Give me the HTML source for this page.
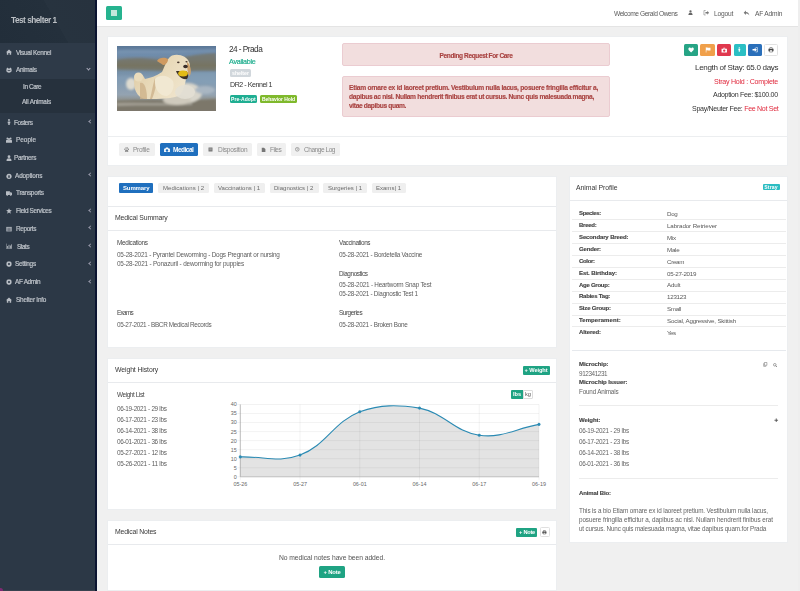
<!DOCTYPE html><html><head><meta charset="utf-8"><style>
*{margin:0;padding:0;box-sizing:border-box}
html,body{width:800px;height:591px;overflow:hidden;background:#f0f0f0;font-family:"Liberation Sans",sans-serif;position:relative}
.a{position:absolute}
.t{position:absolute;white-space:nowrap;will-change:transform}
</style></head><body>
<div class="a" style="left:0px;top:0px;width:95px;height:591px;background:#2c3846;"></div>
<div class="a" style="left:0px;top:0px;width:95px;height:42.5px;background:linear-gradient(60deg,#222e3a 0%,#24303c 57%,#27333f 57.3%,#27323e 100%);"></div>
<div class="a" style="left:0px;top:42.5px;width:95px;height:36.1px;background:#2e3a48;"></div>
<div class="a" style="left:0px;top:78.6px;width:95px;height:34.4px;background:#26313d;"></div>
<div class="a" style="left:95px;top:0px;width:2px;height:591px;background:#0b1430;"></div>
<div class="a" style="left:0px;top:590px;width:95px;height:1px;background:#38424f;"></div>
<div class="a" style="left:-2px;top:588px;width:5px;height:5px;border-radius:50%;background:#7c2a72"></div>
<svg class="a" style="left:5.9px;top:49.4px;color:#b8bdc4;" width="6" height="6" viewBox="0 0 10 10" fill="#b8bdc4"><path d="M5 0.8 L10 5.3 L8.6 5.3 L8.6 9.6 L6.1 9.6 L6.1 6.8 L3.9 6.8 L3.9 9.6 L1.4 9.6 L1.4 5.3 L0 5.3 Z"/></svg>
<svg class="a" style="left:5.9px;top:67.1px;color:#b8bdc4;" width="6" height="6" viewBox="0 0 10 10" fill="#b8bdc4"><path d="M1 2.5 L2.5 1 L4 2.5 L6 2.5 L7.5 1 L9 2.5 L9.5 6 C9.5 8.5 7.5 9.5 5 9.5 C2.5 9.5 0.5 8.5 0.5 6 Z"/><rect x="2.8" y="5" width="4.4" height="1.2" fill="#2d3846"/></svg>
<svg class="a" style="left:5.9px;top:119.4px;color:#b8bdc4;" width="6" height="6" viewBox="0 0 10 10" fill="#b8bdc4"><circle cx="5" cy="1.8" r="1.6"/><path d="M3 4 H7 L7.3 7 H6.2 V10 H3.8 V7 H2.7 Z"/></svg>
<svg class="a" style="left:5.9px;top:137.1px;color:#b8bdc4;" width="6" height="6" viewBox="0 0 10 10" fill="#b8bdc4"><circle cx="2.3" cy="2.5" r="1.5"/><circle cx="7.7" cy="2.5" r="1.5"/><circle cx="5" cy="3.5" r="1.8"/><path d="M0 6.5 C0 4.8 1.2 4.5 2.3 4.5 C3.5 4.5 4 5 5 5.5 C6 5 6.5 4.5 7.7 4.5 C8.8 4.5 10 4.8 10 6.5 V9.5 H0 Z"/></svg>
<svg class="a" style="left:5.9px;top:154.8px;color:#b8bdc4;" width="6" height="6" viewBox="0 0 10 10" fill="#b8bdc4"><circle cx="5" cy="2.8" r="2.3"/><path d="M0.8 9.8 C0.8 6.8 2.5 5.6 5 5.6 C7.5 5.6 9.2 6.8 9.2 9.8 Z"/></svg>
<svg class="a" style="left:5.9px;top:172.6px;color:#b8bdc4;" width="6" height="6" viewBox="0 0 10 10" fill="#b8bdc4"><circle cx="5" cy="5.5" r="4.3"/><rect x="3.8" y="4" width="2.4" height="4" fill="#2d3846"/></svg>
<svg class="a" style="left:5.9px;top:190.2px;color:#b8bdc4;" width="6" height="6" viewBox="0 0 10 10" fill="#b8bdc4"><path d="M0 2 H6.5 V8.2 H0 Z M6.8 3.8 H8.8 L10 5.6 V8.2 H6.8 Z"/><circle cx="2" cy="8.8" r="1.1"/><circle cx="8" cy="8.8" r="1.1"/></svg>
<svg class="a" style="left:5.9px;top:208.0px;color:#b8bdc4;" width="6" height="6" viewBox="0 0 10 10" fill="#b8bdc4"><path d="M5 0.3 L6.4 3.4 L9.8 3.7 L7.2 6 L8 9.5 L5 7.6 L2 9.5 L2.8 6 L0.2 3.7 L3.6 3.4 Z"/></svg>
<svg class="a" style="left:5.9px;top:225.5px;color:#b8bdc4;" width="6" height="6" viewBox="0 0 10 10" fill="#b8bdc4"><path d="M0.5 1.5 H9.5 V9 H0.5 Z" /><path d="M1.3 3.5 H8.7 M1.3 5.5 H8.7 M1.3 7.3 H8.7 M5 3 V8.5" stroke="#2d3846" stroke-width="0.7"/></svg>
<svg class="a" style="left:5.9px;top:243.4px;color:#b8bdc4;" width="6" height="6" viewBox="0 0 10 10" fill="#b8bdc4"><path d="M0.5 1 V9.5 H10" fill="none" stroke-width="0.9" stroke="currentColor"/><rect x="2" y="5" width="1.4" height="4"/><rect x="4.3" y="3" width="1.4" height="6"/><rect x="6.6" y="4.2" width="1.4" height="4.8"/><rect x="8.6" y="2.2" width="1.2" height="6.8"/></svg>
<svg class="a" style="left:5.9px;top:261.2px;color:#b8bdc4;" width="6" height="6" viewBox="0 0 10 10" fill="#b8bdc4"><path fill-rule="evenodd" d="M4 0.3 H6 L6.4 1.8 L7.8 1 L9.2 2.4 L8.3 3.7 L9.8 4 V6 L8.3 6.4 L9.1 7.7 L7.7 9.1 L6.4 8.3 L6 9.8 H4 L3.6 8.3 L2.3 9.1 L0.9 7.7 L1.7 6.4 L0.2 6 V4 L1.7 3.6 L0.9 2.3 L2.3 0.9 L3.6 1.7 Z M5 3.3 A1.7 1.7 0 1 0 5 6.7 A1.7 1.7 0 1 0 5 3.3 Z"/></svg>
<svg class="a" style="left:5.9px;top:278.8px;color:#b8bdc4;" width="6" height="6" viewBox="0 0 10 10" fill="#b8bdc4"><path fill-rule="evenodd" d="M4 0.3 H6 L6.4 1.8 L7.8 1 L9.2 2.4 L8.3 3.7 L9.8 4 V6 L8.3 6.4 L9.1 7.7 L7.7 9.1 L6.4 8.3 L6 9.8 H4 L3.6 8.3 L2.3 9.1 L0.9 7.7 L1.7 6.4 L0.2 6 V4 L1.7 3.6 L0.9 2.3 L2.3 0.9 L3.6 1.7 Z M5 3.3 A1.7 1.7 0 1 0 5 6.7 A1.7 1.7 0 1 0 5 3.3 Z"/></svg>
<svg class="a" style="left:5.9px;top:296.6px;color:#b8bdc4;" width="6" height="6" viewBox="0 0 10 10" fill="#b8bdc4"><path d="M5 0.8 L10 5.3 L8.6 5.3 L8.6 9.6 L6.1 9.6 L6.1 6.8 L3.9 6.8 L3.9 9.6 L1.4 9.6 L1.4 5.3 L0 5.3 Z"/></svg>
<div class="a" style="left:87px;top:66.6px;width:3px;height:3px;border-right:1px solid #aab;border-bottom:1px solid #aab;transform:rotate(45deg)"></div>
<div class="a" style="left:88.6px;top:120.10000000000001px;width:3px;height:3px;border-left:1px solid #99a;border-bottom:1px solid #99a;transform:rotate(45deg)"></div>
<div class="a" style="left:88.6px;top:173.29999999999998px;width:3px;height:3px;border-left:1px solid #99a;border-bottom:1px solid #99a;transform:rotate(45deg)"></div>
<div class="a" style="left:88.6px;top:208.7px;width:3px;height:3px;border-left:1px solid #99a;border-bottom:1px solid #99a;transform:rotate(45deg)"></div>
<div class="a" style="left:88.6px;top:226.2px;width:3px;height:3px;border-left:1px solid #99a;border-bottom:1px solid #99a;transform:rotate(45deg)"></div>
<div class="a" style="left:88.6px;top:244.1px;width:3px;height:3px;border-left:1px solid #99a;border-bottom:1px solid #99a;transform:rotate(45deg)"></div>
<div class="a" style="left:88.6px;top:261.9px;width:3px;height:3px;border-left:1px solid #99a;border-bottom:1px solid #99a;transform:rotate(45deg)"></div>
<div class="a" style="left:88.6px;top:279.5px;width:3px;height:3px;border-left:1px solid #99a;border-bottom:1px solid #99a;transform:rotate(45deg)"></div>
<div class="a" style="left:97px;top:0px;width:701px;height:26.8px;background:#ffffff;border-bottom:1px solid #e4e4e4"></div>
<div class="a" style="left:798px;top:0px;width:2px;height:591px;background:#eeeeee;"></div>
<div class="a" style="left:106px;top:6px;width:16.4px;height:14px;background:#26b38f;border-radius:1.5px"></div>
<div class="a" style="left:111.3px;top:10.2px;width:5.8px;height:5.7px;background:#c2e8dc;"></div>
<svg class="a" style="left:688.2px;top:10.3px;color:#666;" width="5" height="5" viewBox="0 0 10 10" fill="#666"><circle cx="5" cy="2.8" r="2.3"/><path d="M0.8 9.8 C0.8 6.8 2.5 5.6 5 5.6 C7.5 5.6 9.2 6.8 9.2 9.8 Z"/></svg>
<svg class="a" style="left:703.3px;top:10.4px;color:#777;" width="6.5" height="5.5" viewBox="0 0 10 10" fill="#777"><path d="M3.5 3.8 H7 V1.5 L10 5 L7 8.5 V6.2 H3.5 Z"/><path d="M4 1 H0.8 V9 H4" fill="none" stroke="currentColor" stroke-width="1"/></svg>
<svg class="a" style="left:742.5px;top:10px;color:#777;" width="7" height="6" viewBox="0 0 10 10" fill="#777"><path d="M4 1 L0.3 4.6 L4 8.2 V6 C6.5 6 8.3 6.8 9.7 9 C9.4 5.8 7.5 3.4 4 3.2 Z"/></svg>
<div class="a" style="left:107px;top:36px;width:681px;height:130px;background:#fff;border:1px solid #eceef0"></div>
<div class="a" style="left:108px;top:136px;width:679.3px;height:1px;background:#eceef0;"></div>
<svg class="a" style="left:117px;top:46px" width="99" height="65" viewBox="0 0 99 65">
<defs>
<linearGradient id="wg" x1="0" y1="0" x2="0" y2="1">
<stop offset="0" stop-color="#5b7797"/><stop offset="0.14" stop-color="#6f8cab"/><stop offset="0.2" stop-color="#72869a"/><stop offset="0.3" stop-color="#75786c"/><stop offset="0.4" stop-color="#7690a8"/><stop offset="0.55" stop-color="#839cb3"/><stop offset="0.75" stop-color="#94a3b1"/><stop offset="0.87" stop-color="#8c897c"/><stop offset="1" stop-color="#7e786c"/>
</linearGradient>
<linearGradient id="dg" x1="0" y1="0" x2="1" y2="0.6">
<stop offset="0" stop-color="#dcc7a0"/><stop offset="0.5" stop-color="#e8d9b8"/><stop offset="1" stop-color="#efe4cc"/>
</linearGradient>
<filter id="b1" x="-20%" y="-20%" width="140%" height="140%"><feGaussianBlur stdDeviation="1.2"/></filter>
<filter id="b2" x="-20%" y="-20%" width="140%" height="140%"><feGaussianBlur stdDeviation="0.55"/></filter>
</defs>
<rect x="0" y="0" width="99" height="65" fill="url(#wg)"/>
<g filter="url(#b1)">
<path d="M0,14 C10,12 25,11 40,14 C55,16 70,8 99,7 L99,25 C80,24 65,26 50,25 C35,24 15,24 0,23 Z" fill="#77725e" opacity="0.7"/>
<path d="M0,4 C20,3 50,5 99,3 L99,6 C50,8 20,7 0,8 Z" fill="#86a0bb" opacity="0.5"/>
<path d="M0,30 C20,29 40,31 60,30 L60,34 C40,35 20,34 0,35 Z" fill="#88a0b8" opacity="0.5"/>
<path d="M72,27 C80,26 90,27 99,26 L99,38 C90,37 80,36 72,36 Z" fill="#86a0b8" opacity="0.6"/>
<path d="M0,55 C25,53 60,56 99,53 L99,65 L0,65 Z" fill="#7c776a"/>
<path d="M0,57 C25,56 50,58 75,57 L75,59 C50,60 25,59 0,60 Z" fill="#b3b0a6" opacity="0.7"/>
<ellipse cx="70" cy="47" rx="15" ry="10" fill="#d8d5cb"/>
<ellipse cx="60" cy="54" rx="14" ry="5" fill="#cfcabd"/>
<ellipse cx="88" cy="44" rx="10" ry="4" fill="#a9b6c2"/>
<ellipse cx="14" cy="38" rx="5" ry="6" fill="#dedbd0"/>
</g>
<g filter="url(#b2)">
<path d="M17,36 C17,30 20,26.5 23.5,27.5 C26,28.5 27,31 28,33 C33,32 39,30 45,26 C48,20 50,12 55,9.5 C62,7.5 70,10 72.5,17 C74,23 71,28 69,33 C68,38 67,44 63,49 C57,53 42,53 30,53 C22,53 17,46 17,36 Z" fill="url(#dg)"/>
<ellipse cx="21.5" cy="31" rx="4.5" ry="4.5" fill="#eadcbc"/>
<path d="M23,37 C27,35 30,42 30,53 L23,53 Z" fill="#cdb28a" opacity="0.8"/>
<path d="M38,32 C40,38 38,46 35,53 L33,53 C35,45 36,38 38,32 Z" fill="#c9ad84" opacity="0.7"/>
<path d="M40,15 C42,11 48,11 51,13 C51,17 48,19 46,19 C44,17 41,16 40,15 Z" fill="#cf9a60"/>
<path d="M70,16 C74,19 75,27 72.5,30 C70.5,28 70,21 70,16 Z" fill="#cfa36c"/>
<path d="M38,33 C42,29 50,28 56,35 C58,41 55,48 50,50 C43,50 37,44 38,33 Z" fill="#f1e8d2"/>
<path d="M59,25 C61,30 65,34 70,33 C72,30 71,26 69,25 Z" fill="#3d3127"/>
<ellipse cx="66" cy="27.6" rx="4.8" ry="3" fill="#e2bb14"/>
<ellipse cx="68.5" cy="20.5" rx="2.3" ry="1.8" fill="#3a2e2a"/>
<ellipse cx="61.3" cy="16.3" rx="1.3" ry="0.9" fill="#4a3a30"/>
<ellipse cx="69.5" cy="15.8" rx="1.1" ry="0.8" fill="#4a3a30"/>
<ellipse cx="68" cy="46" rx="10" ry="7" fill="#e4e0d5" opacity="0.85"/>
</g>
</svg>

<div class="a" style="left:229.7px;top:69.2px;width:21.8px;height:8.2px;background:#d1d7dc;border-radius:1.5px"></div>
<div class="a" style="left:229.6px;top:94.5px;width:27.9px;height:8.3px;background:#1fae92;border-radius:1.5px"></div>
<div class="a" style="left:260.2px;top:94.5px;width:37.3px;height:8.3px;background:#7fb92c;border-radius:1.5px"></div>
<div class="a" style="left:342px;top:43.4px;width:267.6px;height:22.8px;background:#f2dede;border:0.5px solid #ebccd1;border-radius:2px"></div>
<div class="a" style="left:342px;top:76.1px;width:267.6px;height:40.8px;background:#f2dede;border:0.5px solid #ebccd1;border-radius:2px"></div>
<div class="a" style="left:683.9px;top:43.5px;width:14.2px;height:12.8px;background:#26a485;border-radius:1.5px"></div>
<div class="a" style="left:700px;top:43.5px;width:14.9px;height:12.8px;background:#f0a04b;border-radius:1.5px"></div>
<div class="a" style="left:717px;top:43.5px;width:14.4px;height:12.8px;background:#e0384e;border-radius:1.5px"></div>
<div class="a" style="left:733.5px;top:43.5px;width:12.3px;height:12.8px;background:#2bbfc4;border-radius:1.5px"></div>
<div class="a" style="left:747.6px;top:43.5px;width:14.3px;height:12.8px;background:#2a6fba;border-radius:1.5px"></div>
<div class="a" style="left:763.7px;top:43.5px;width:14.7px;height:12.8px;background:#fff;border:0.5px solid #e2e2e2;border-radius:1.5px"></div>
<svg class="a" style="left:687.8px;top:46.8px;color:#fff;" width="6.2" height="6" viewBox="0 0 10 10" fill="#fff"><path d="M5 9.2 L1.2 5.4 C-0.3 3.8 0.5 1 2.8 1 C3.9 1 4.6 1.7 5 2.4 C5.4 1.7 6.1 1 7.2 1 C9.5 1 10.3 3.8 8.8 5.4 Z"/></svg>
<svg class="a" style="left:704.5px;top:47px;color:#fff;" width="6" height="5.5" viewBox="0 0 10 10" fill="#fff"><path d="M1 0.5 H2 V10 H1 Z M2 1.2 C4 0.2 6 2.2 9.5 1.2 V6.2 C6 7.2 4 5.2 2 6.2 Z"/></svg>
<svg class="a" style="left:721px;top:47px;color:#fff;" width="6.5" height="6" viewBox="0 0 10 10" fill="#fff"><path fill-rule="evenodd" d="M3.5 1.2 H6.5 V2.8 H9.5 V9 H0.5 V2.8 H3.5 Z M4.3 2 V2.8 H5.7 V2 Z M5 4 A2 2 0 1 0 5 8 A2 2 0 1 0 5 4 Z"/></svg>
<svg class="a" style="left:737.3px;top:46.4px;color:#fff;" width="4.6" height="6.8" viewBox="0 0 10 10" fill="#fff"><circle cx="5" cy="1.6" r="1.5"/><path d="M3 3.6 H7 V7 H6.2 V10 H3.8 V7 H3 Z"/></svg>
<svg class="a" style="left:751.8px;top:47.2px;color:#fff;" width="6" height="5.5" viewBox="0 0 10 10" fill="#fff"><path d="M0.5 3.8 H4.5 V1.5 L8.5 5 L4.5 8.5 V6.2 H0.5 Z"/><path d="M6 1 H9.5 V9 H6" fill="none" stroke="currentColor" stroke-width="1"/></svg>
<svg class="a" style="left:768px;top:47.3px;color:#444;" width="6" height="5.5" viewBox="0 0 10 10" fill="#444"><path fill-rule="evenodd" d="M2.5 0.8 H7.5 V3.2 H9.6 V7.5 H7.8 V9.4 H2.2 V7.5 H0.4 V3.2 H2.5 Z M3.3 1.6 V3.2 H6.7 V1.6 Z M3 6 V8.6 H7 V6 Z"/></svg>
<div class="a" style="left:691px;top:104.9px;white-space:nowrap"></div>
<div class="a" style="left:119.3px;top:143.3px;width:35.4px;height:12.5px;background:#f0f0f0;border-radius:1.5px"></div>
<div class="a" style="left:159.8px;top:143.3px;width:38.7px;height:12.5px;background:#1f6fbe;border-radius:1.5px"></div>
<div class="a" style="left:203.4px;top:143.3px;width:48.6px;height:12.5px;background:#f0f0f0;border-radius:1.5px"></div>
<div class="a" style="left:256.6px;top:143.3px;width:29.65px;height:12.5px;background:#f0f0f0;border-radius:1.5px"></div>
<div class="a" style="left:291.3px;top:143.3px;width:48.7px;height:12.5px;background:#f0f0f0;border-radius:1.5px"></div>
<svg class="a" style="left:123.5px;top:146.8px;color:#8a8a8a;" width="5.3" height="5.3" viewBox="0 0 10 10" fill="#8a8a8a"><circle cx="1.6" cy="4.2" r="1.3"/><circle cx="3.8" cy="1.9" r="1.3"/><circle cx="6.2" cy="1.9" r="1.3"/><circle cx="8.4" cy="4.2" r="1.3"/><path d="M5 4.6 C7 4.6 8.6 7 8.2 8.4 C7.8 9.8 6 9 5 9 C4 9 2.2 9.8 1.8 8.4 C1.4 7 3 4.6 5 4.6 Z"/></svg>
<svg class="a" style="left:163.5px;top:146.6px;color:#fff;" width="6" height="5.8" viewBox="0 0 10 10" fill="#fff"><path fill-rule="evenodd" d="M3.2 1 H6.8 L7.6 2.6 H9 Q10 2.6 10 3.6 V8.6 Q10 9.6 9 9.6 H1 Q0 9.6 0 8.6 V3.6 Q0 2.6 1 2.6 H2.4 Z M5 3.8 A2.3 2.3 0 1 0 5 8.4 A2.3 2.3 0 1 0 5 3.8 Z"/></svg>
<svg class="a" style="left:207.9px;top:146.9px;color:#777;" width="5" height="5" viewBox="0 0 10 10" fill="#777"><rect x="1" y="1" width="8" height="8"/><path d="M2.5 3.5 H7.5 M2.5 5.5 H7.5" stroke="#f0f0f0" stroke-width="0.6"/></svg>
<svg class="a" style="left:261px;top:146.5px;color:#777;" width="5" height="5.8" viewBox="0 0 10 10" fill="#777"><path d="M1.5 0.5 H6 L8.8 3.3 V9.7 H1.5 Z"/></svg>
<svg class="a" style="left:295px;top:147px;color:#777;" width="4.6" height="4.6" viewBox="0 0 10 10" fill="#777"><circle cx="5" cy="5" r="4" fill="none" stroke="currentColor" stroke-width="1.3"/><path d="M5 2.6 V5.2 H7" fill="none" stroke="currentColor" stroke-width="1"/></svg>
<div class="a" style="left:107px;top:176px;width:450px;height:172px;background:#fff;border:1px solid #eceef0"></div>
<div class="a" style="left:108px;top:206px;width:448.4px;height:1px;background:#e8eaed;"></div>
<div class="a" style="left:108px;top:230px;width:448.4px;height:1px;background:#e8eaed;"></div>
<div class="a" style="left:119.4px;top:183.4px;width:34.0px;height:9.2px;background:#1f6fbe;border-radius:1px"></div>
<div class="a" style="left:158.4px;top:183.4px;width:50.6px;height:9.2px;background:#efefef;border-radius:1.5px"></div>
<div class="a" style="left:214px;top:183.4px;width:51px;height:9.2px;background:#efefef;border-radius:1.5px"></div>
<div class="a" style="left:270px;top:183.4px;width:48.6px;height:9.2px;background:#efefef;border-radius:1.5px"></div>
<div class="a" style="left:323.4px;top:183.4px;width:43.6px;height:9.2px;background:#efefef;border-radius:1.5px"></div>
<div class="a" style="left:372px;top:183.4px;width:33.6px;height:9.2px;background:#efefef;border-radius:1.5px"></div>
<div class="a" style="left:107px;top:358px;width:450px;height:152px;background:#fff;border:1px solid #eceef0"></div>
<div class="a" style="left:108px;top:382px;width:448.4px;height:1px;background:#e8eaed;"></div>
<div class="a" style="left:523px;top:365.7px;width:26.5px;height:9.4px;background:#1fa383;border-radius:1px"></div>
<div class="a" style="left:511.1px;top:389.7px;width:12.1px;height:9.3px;background:#1fa383;border-radius:1px 0 0 1px"></div>
<div class="a" style="left:523.2px;top:389.7px;width:10.3px;height:9.3px;background:#fff;border:0.5px solid #ddd;border-radius:0 1px 1px 0"></div>
<svg class="a" style="left:215px;top:395px" width="340" height="100" viewBox="215 395 340 100">
<path d="M240.30,456.92 C264.20,456.19 278.66,463.20 300.04,455.11 C326.45,445.12 333.39,422.11 359.78,411.73 C381.18,404.50 396.72,404.50 419.52,408.12 C444.51,413.03 454.44,431.85 479.26,435.23 C502.23,438.36 515.10,428.72 539.00,424.38 L539.00,476.80 L240.30,476.80 Z" fill="#e3e3e3"/>
<line x1="237.30" y1="476.80" x2="539.00" y2="476.80" stroke="#000" stroke-opacity="0.09" stroke-width="0.6"/>
<line x1="237.30" y1="467.76" x2="539.00" y2="467.76" stroke="#000" stroke-opacity="0.09" stroke-width="0.6"/>
<line x1="237.30" y1="458.73" x2="539.00" y2="458.73" stroke="#000" stroke-opacity="0.09" stroke-width="0.6"/>
<line x1="237.30" y1="449.69" x2="539.00" y2="449.69" stroke="#000" stroke-opacity="0.09" stroke-width="0.6"/>
<line x1="237.30" y1="440.65" x2="539.00" y2="440.65" stroke="#000" stroke-opacity="0.09" stroke-width="0.6"/>
<line x1="237.30" y1="431.61" x2="539.00" y2="431.61" stroke="#000" stroke-opacity="0.09" stroke-width="0.6"/>
<line x1="237.30" y1="422.57" x2="539.00" y2="422.57" stroke="#000" stroke-opacity="0.09" stroke-width="0.6"/>
<line x1="237.30" y1="413.54" x2="539.00" y2="413.54" stroke="#000" stroke-opacity="0.09" stroke-width="0.6"/>
<line x1="237.30" y1="404.50" x2="539.00" y2="404.50" stroke="#000" stroke-opacity="0.09" stroke-width="0.6"/>
<line x1="240.30" y1="404.50" x2="240.30" y2="479.80" stroke="#000" stroke-opacity="0.09" stroke-width="0.6"/>
<line x1="300.04" y1="404.50" x2="300.04" y2="479.80" stroke="#000" stroke-opacity="0.09" stroke-width="0.6"/>
<line x1="359.78" y1="404.50" x2="359.78" y2="479.80" stroke="#000" stroke-opacity="0.09" stroke-width="0.6"/>
<line x1="419.52" y1="404.50" x2="419.52" y2="479.80" stroke="#000" stroke-opacity="0.09" stroke-width="0.6"/>
<line x1="479.26" y1="404.50" x2="479.26" y2="479.80" stroke="#000" stroke-opacity="0.09" stroke-width="0.6"/>
<line x1="539.00" y1="404.50" x2="539.00" y2="479.80" stroke="#000" stroke-opacity="0.09" stroke-width="0.6"/>
<line x1="240.30" y1="404.50" x2="240.30" y2="476.80" stroke="#999" stroke-width="0.6"/>
<line x1="240.30" y1="476.80" x2="539.00" y2="476.80" stroke="#aaa" stroke-width="0.6"/>
<path d="M240.30,456.92 C264.20,456.19 278.66,463.20 300.04,455.11 C326.45,445.12 333.39,422.11 359.78,411.73 C381.18,404.50 396.72,404.50 419.52,408.12 C444.51,413.03 454.44,431.85 479.26,435.23 C502.23,438.36 515.10,428.72 539.00,424.38" fill="none" stroke="#2a8ab3" stroke-width="1.1"/>
<circle cx="240.30" cy="456.92" r="1.3" fill="#2a8ab3" stroke="#2a8ab3" stroke-width="0.4"/>
<circle cx="300.04" cy="455.11" r="1.3" fill="#2a8ab3" stroke="#2a8ab3" stroke-width="0.4"/>
<circle cx="359.78" cy="411.73" r="1.3" fill="#2a8ab3" stroke="#2a8ab3" stroke-width="0.4"/>
<circle cx="419.52" cy="408.12" r="1.3" fill="#2a8ab3" stroke="#2a8ab3" stroke-width="0.4"/>
<circle cx="479.26" cy="435.23" r="1.3" fill="#2a8ab3" stroke="#2a8ab3" stroke-width="0.4"/>
<circle cx="539.00" cy="424.38" r="1.3" fill="#2a8ab3" stroke="#2a8ab3" stroke-width="0.4"/>
<text x="236.8" y="478.70" text-anchor="end" font-family="Liberation Sans" font-size="5.4" fill="#666">0</text>
<text x="236.8" y="469.66" text-anchor="end" font-family="Liberation Sans" font-size="5.4" fill="#666">5</text>
<text x="236.8" y="460.62" text-anchor="end" font-family="Liberation Sans" font-size="5.4" fill="#666">10</text>
<text x="236.8" y="451.59" text-anchor="end" font-family="Liberation Sans" font-size="5.4" fill="#666">15</text>
<text x="236.8" y="442.55" text-anchor="end" font-family="Liberation Sans" font-size="5.4" fill="#666">20</text>
<text x="236.8" y="433.51" text-anchor="end" font-family="Liberation Sans" font-size="5.4" fill="#666">25</text>
<text x="236.8" y="424.47" text-anchor="end" font-family="Liberation Sans" font-size="5.4" fill="#666">30</text>
<text x="236.8" y="415.44" text-anchor="end" font-family="Liberation Sans" font-size="5.4" fill="#666">35</text>
<text x="236.8" y="406.40" text-anchor="end" font-family="Liberation Sans" font-size="5.4" fill="#666">40</text>
<text x="240.30" y="486.10" text-anchor="middle" font-family="Liberation Sans" font-size="5.4" fill="#666">05-26</text>
<text x="300.04" y="486.10" text-anchor="middle" font-family="Liberation Sans" font-size="5.4" fill="#666">05-27</text>
<text x="359.78" y="486.10" text-anchor="middle" font-family="Liberation Sans" font-size="5.4" fill="#666">06-01</text>
<text x="419.52" y="486.10" text-anchor="middle" font-family="Liberation Sans" font-size="5.4" fill="#666">06-14</text>
<text x="479.26" y="486.10" text-anchor="middle" font-family="Liberation Sans" font-size="5.4" fill="#666">06-17</text>
<text x="539.00" y="486.10" text-anchor="middle" font-family="Liberation Sans" font-size="5.4" fill="#666">06-19</text>
</svg>
<div class="a" style="left:107px;top:520px;width:450px;height:71px;background:#fff;border:1px solid #eceef0"></div>
<div class="a" style="left:108px;top:544px;width:448.4px;height:1px;background:#e8eaed;"></div>
<div class="a" style="left:515.8px;top:527.8px;width:21.4px;height:9.2px;background:#1fa383;border-radius:1px"></div>
<div class="a" style="left:539.5px;top:527.2px;width:10.0px;height:10.3px;background:#fff;border:0.5px solid #e0e0e0;border-radius:1.5px"></div>
<svg class="a" style="left:542.2px;top:530px;color:#444;" width="4.8" height="4.5" viewBox="0 0 10 10" fill="#444"><path fill-rule="evenodd" d="M2.5 0.8 H7.5 V3.2 H9.6 V7.5 H7.8 V9.4 H2.2 V7.5 H0.4 V3.2 H2.5 Z M3.3 1.6 V3.2 H6.7 V1.6 Z M3 6 V8.6 H7 V6 Z"/></svg>
<div class="a" style="left:319px;top:565.5px;width:26.2px;height:12.8px;background:#1fa383;border-radius:1.5px"></div>
<div class="a" style="left:569px;top:176px;width:219px;height:367px;background:#fff;border:1px solid #eceef0"></div>
<div class="a" style="left:569.6px;top:200px;width:217.6px;height:1px;background:#e8eaed;"></div>
<div class="a" style="left:762.6px;top:184px;width:17.6px;height:6.4px;background:#2bbdc2;border-radius:1px"></div>
<div class="a" style="left:572px;top:219.20999999999998px;width:213.5px;height:0.5px;background:#ececec;"></div>
<div class="a" style="left:572px;top:231.13px;width:213.5px;height:0.5px;background:#ececec;"></div>
<div class="a" style="left:572px;top:243.04999999999998px;width:213.5px;height:0.5px;background:#ececec;"></div>
<div class="a" style="left:572px;top:254.97px;width:213.5px;height:0.5px;background:#ececec;"></div>
<div class="a" style="left:572px;top:266.89000000000004px;width:213.5px;height:0.5px;background:#ececec;"></div>
<div class="a" style="left:572px;top:278.81px;width:213.5px;height:0.5px;background:#ececec;"></div>
<div class="a" style="left:572px;top:290.73px;width:213.5px;height:0.5px;background:#ececec;"></div>
<div class="a" style="left:572px;top:302.65000000000003px;width:213.5px;height:0.5px;background:#ececec;"></div>
<div class="a" style="left:572px;top:314.57px;width:213.5px;height:0.5px;background:#ececec;"></div>
<div class="a" style="left:572px;top:326.49px;width:213.5px;height:0.5px;background:#ececec;"></div>
<div class="a" style="left:572px;top:349.5px;width:213.5px;height:0.7px;background:#e6e9ed;"></div>
<svg class="a" style="left:763.2px;top:362.3px;color:#666;" width="4.6" height="4.8" viewBox="0 0 10 10" fill="#666"><path d="M3 0.8 H8.5 V7 H3 Z M1.5 2.5 V9.3 H7" fill="none" stroke="currentColor" stroke-width="1.1"/></svg>
<svg class="a" style="left:773.3px;top:362.5px;color:#666;" width="4.5" height="4.5" viewBox="0 0 10 10" fill="#666"><circle cx="4" cy="4" r="2.9" fill="none" stroke="currentColor" stroke-width="1.3"/><path d="M6 6 L9.4 9.4" stroke="currentColor" stroke-width="1.6"/></svg>
<svg class="a" style="left:774px;top:417.6px;color:#444;" width="4.5" height="4.5" viewBox="0 0 10 10" fill="#444"><path d="M5 1 V9 M1 5 H9" stroke="currentColor" stroke-width="1.8"/></svg>
<div class="a" style="left:578.5px;top:405.3px;width:199.5px;height:0.6px;background:#ececec;"></div>
<div class="a" style="left:578.5px;top:477.7px;width:199.5px;height:0.6px;background:#ececec;"></div>
<div id="t0" class="t" style="left:10.50px;top:15.72px;font-size:8.28px;line-height:9.94px;font-weight:700;color:#bcc0c5;letter-spacing:-0.506px;">Test shelter 1</div>
<div id="t1" class="t" style="left:15.60px;top:48.66px;font-size:6.43px;line-height:7.72px;font-weight:400;color:#bfc4ca;letter-spacing:-0.304px;-webkit-text-stroke:0.2px #bfc4ca">Visual Kennel</div>
<div id="t2" class="t" style="left:15.60px;top:66.36px;font-size:6.43px;line-height:7.72px;font-weight:400;color:#bfc4ca;letter-spacing:-0.321px;-webkit-text-stroke:0.2px #bfc4ca">Animals</div>
<div id="t3" class="t" style="left:22.50px;top:82.76px;font-size:6.43px;line-height:7.72px;font-weight:400;color:#bfc4ca;letter-spacing:-0.409px;-webkit-text-stroke:0.2px #bfc4ca">In Care</div>
<div id="t4" class="t" style="left:22.30px;top:97.66px;font-size:6.43px;line-height:7.72px;font-weight:400;color:#bfc4ca;letter-spacing:-0.229px;-webkit-text-stroke:0.2px #bfc4ca">All Animals</div>
<div id="t5" class="t" style="left:13.70px;top:118.66px;font-size:6.43px;line-height:7.72px;font-weight:400;color:#bfc4ca;letter-spacing:-0.417px;-webkit-text-stroke:0.2px #bfc4ca">Fosters</div>
<div id="t6" class="t" style="left:15.50px;top:136.36px;font-size:6.43px;line-height:7.72px;font-weight:400;color:#bfc4ca;letter-spacing:0.000px;-webkit-text-stroke:0.2px #bfc4ca">People</div>
<div id="t7" class="t" style="left:14.40px;top:154.06px;font-size:6.43px;line-height:7.72px;font-weight:400;color:#bfc4ca;letter-spacing:-0.260px;-webkit-text-stroke:0.2px #bfc4ca">Partners</div>
<div id="t8" class="t" style="left:15.00px;top:171.86px;font-size:6.43px;line-height:7.72px;font-weight:400;color:#bfc4ca;letter-spacing:-0.153px;-webkit-text-stroke:0.2px #bfc4ca">Adoptions</div>
<div id="t9" class="t" style="left:16.40px;top:189.46px;font-size:6.43px;line-height:7.72px;font-weight:400;color:#bfc4ca;letter-spacing:-0.267px;-webkit-text-stroke:0.2px #bfc4ca">Transports</div>
<div id="t10" class="t" style="left:15.80px;top:207.26px;font-size:6.43px;line-height:7.72px;font-weight:400;color:#bfc4ca;letter-spacing:-0.352px;-webkit-text-stroke:0.2px #bfc4ca">Field Services</div>
<div id="t11" class="t" style="left:15.80px;top:224.76px;font-size:6.43px;line-height:7.72px;font-weight:400;color:#bfc4ca;letter-spacing:-0.329px;-webkit-text-stroke:0.2px #bfc4ca">Reports</div>
<div id="t12" class="t" style="left:17.00px;top:242.66px;font-size:6.43px;line-height:7.72px;font-weight:400;color:#bfc4ca;letter-spacing:-0.508px;-webkit-text-stroke:0.2px #bfc4ca">Stats</div>
<div id="t13" class="t" style="left:15.20px;top:260.46px;font-size:6.43px;line-height:7.72px;font-weight:400;color:#bfc4ca;letter-spacing:-0.302px;-webkit-text-stroke:0.2px #bfc4ca">Settings</div>
<div id="t14" class="t" style="left:15.00px;top:278.06px;font-size:6.43px;line-height:7.72px;font-weight:400;color:#bfc4ca;letter-spacing:-0.330px;-webkit-text-stroke:0.2px #bfc4ca">AF Admin</div>
<div id="t15" class="t" style="left:15.80px;top:295.86px;font-size:6.43px;line-height:7.72px;font-weight:400;color:#bfc4ca;letter-spacing:-0.220px;-webkit-text-stroke:0.2px #bfc4ca">Shelter Info</div>
<div id="t16" class="t" style="left:613.75px;top:9.63px;font-size:6.65px;line-height:7.98px;font-weight:400;color:#5a5a5a;letter-spacing:-0.418px;">Welcome Gerald Owens</div>
<div id="t17" class="t" style="left:714.25px;top:9.63px;font-size:6.65px;line-height:7.98px;font-weight:400;color:#5a5a5a;letter-spacing:-0.185px;">Logout</div>
<div id="t18" class="t" style="left:755.00px;top:9.63px;font-size:6.65px;line-height:7.98px;font-weight:400;color:#5a5a5a;letter-spacing:-0.200px;">AF Admin</div>
<div id="t19" class="t" style="left:229.30px;top:44.62px;font-size:8.28px;line-height:9.94px;font-weight:400;color:#333;letter-spacing:-0.541px;">24 - Prada</div>
<div id="t20" class="t" style="left:229.30px;top:58.09px;font-size:7.19px;line-height:8.63px;font-weight:400;color:#1fae8e;letter-spacing:-0.283px;-webkit-text-stroke:0.2px #1fae8e">Available</div>
<div id="t21" class="t" style="left:232.00px;top:70.31px;font-size:5.23px;line-height:6.28px;font-weight:700;color:#fff;letter-spacing:-0.018px;">shelter</div>
<div id="t22" class="t" style="left:229.50px;top:81.35px;font-size:7.09px;line-height:8.51px;font-weight:400;color:#333;letter-spacing:-0.458px;">DR2 - Kennel 1</div>
<div id="t23" class="t" style="left:231.20px;top:95.74px;font-size:5.01px;line-height:6.01px;font-weight:700;color:#fff;letter-spacing:0.070px;">Pre-Adopt</div>
<div id="t24" class="t" style="left:262.40px;top:95.74px;font-size:5.01px;line-height:6.01px;font-weight:700;color:#fff;letter-spacing:-0.070px;">Behavior Hold</div>
<div id="t25" class="t" style="left:475.80px;transform:translateX(-50%);top:51.60px;font-size:6.54px;line-height:7.85px;font-weight:700;color:#a94442;letter-spacing:-0.385px;-webkit-text-stroke:0.15px currentColor;">Pending Request For Care</div>
<div id="t26" class="t" style="left:349.00px;top:84.13px;font-size:6.65px;line-height:7.98px;font-weight:700;color:#a94442;letter-spacing:-0.251px;-webkit-text-stroke:0.15px currentColor;">Etiam ornare ex id laoreet pretium. Vestibulum nulla lacus, posuere fringilla efficitur a,</div>
<div id="t27" class="t" style="left:349.00px;top:92.83px;font-size:6.65px;line-height:7.98px;font-weight:700;color:#a94442;letter-spacing:-0.308px;-webkit-text-stroke:0.15px currentColor;">dapibus ac nisl. Nullam hendrerit finibus erat ut cursus. Nunc quis malesuada magna,</div>
<div id="t28" class="t" style="left:349.00px;top:101.53px;font-size:6.65px;line-height:7.98px;font-weight:700;color:#a94442;letter-spacing:-0.360px;-webkit-text-stroke:0.15px currentColor;">vitae dapibus quam.</div>
<div id="t29" class="t" style="right:22.00px;top:63.05px;font-size:8.07px;line-height:9.68px;font-weight:400;color:#333;letter-spacing:-0.330px;">Length of Stay: 65.0 days</div>
<div id="t30" class="t" style="right:22.00px;top:78.45px;font-size:7.09px;line-height:8.51px;font-weight:400;color:#e0283c;letter-spacing:-0.250px;">Stray Hold : Complete</div>
<div id="t31" class="t" style="right:22.00px;top:91.45px;font-size:7.09px;line-height:8.51px;font-weight:400;color:#333;letter-spacing:-0.325px;">Adoption Fee: $100.00</div>
<div id="t32" class="t" style="right:22.00px;top:105.25px;font-size:7.09px;line-height:8.51px;font-weight:400;color:#333;letter-spacing:-0.312px;">Spay/Neuter Fee: <span style="color:#e0283c">Fee Not Set</span></div>
<div id="t33" class="t" style="left:133.25px;top:145.70px;font-size:6.54px;line-height:7.85px;font-weight:400;color:#8a8a8a;letter-spacing:-0.274px;">Profile</div>
<div id="t34" class="t" style="left:173.30px;top:145.70px;font-size:6.54px;line-height:7.85px;font-weight:700;color:#fff;letter-spacing:-0.510px;">Medical</div>
<div id="t35" class="t" style="left:217.80px;top:145.70px;font-size:6.54px;line-height:7.85px;font-weight:400;color:#8a8a8a;letter-spacing:-0.232px;">Disposition</div>
<div id="t36" class="t" style="left:270.30px;top:145.70px;font-size:6.54px;line-height:7.85px;font-weight:400;color:#8a8a8a;letter-spacing:-0.519px;">Files</div>
<div id="t37" class="t" style="left:304.40px;top:145.70px;font-size:6.54px;line-height:7.85px;font-weight:400;color:#8a8a8a;letter-spacing:-0.459px;">Change Log</div>
<div id="t38" class="t" style="left:123.40px;top:184.53px;font-size:6.0px;line-height:7.20px;font-weight:700;color:#fff;letter-spacing:-0.137px;">Summary</div>
<div id="t39" class="t" style="left:163.00px;top:184.53px;font-size:6.0px;line-height:7.20px;font-weight:400;color:#6a6a6a;letter-spacing:0.063px;">Medications | 2</div>
<div id="t40" class="t" style="left:218.00px;top:184.53px;font-size:6.0px;line-height:7.20px;font-weight:400;color:#6a6a6a;letter-spacing:0.024px;">Vaccinations | 1</div>
<div id="t41" class="t" style="left:274.40px;top:184.53px;font-size:6.0px;line-height:7.20px;font-weight:400;color:#6a6a6a;letter-spacing:0.010px;">Diagnostics | 2</div>
<div id="t42" class="t" style="left:327.60px;top:184.53px;font-size:6.0px;line-height:7.20px;font-weight:400;color:#6a6a6a;letter-spacing:0.006px;">Surgeries | 1</div>
<div id="t43" class="t" style="left:375.60px;top:184.53px;font-size:6.0px;line-height:7.20px;font-weight:400;color:#6a6a6a;letter-spacing:0.012px;">Exams| 1</div>
<div id="t44" class="t" style="left:115.00px;top:213.99px;font-size:6.87px;line-height:8.24px;font-weight:400;color:#383838;letter-spacing:-0.153px;">Medical Summary</div>
<div id="t45" class="t" style="left:116.75px;top:239.19px;font-size:6.38px;line-height:7.66px;font-weight:400;color:#444;letter-spacing:-0.303px;">Medications</div>
<div id="t46" class="t" style="left:116.75px;top:251.04px;font-size:6.38px;line-height:7.66px;font-weight:400;color:#5c5c5c;letter-spacing:-0.195px;">05-28-2021 - Pyrantel Deworming - Dogs Pregnant or nursing</div>
<div id="t47" class="t" style="left:116.75px;top:260.04px;font-size:6.38px;line-height:7.66px;font-weight:400;color:#5c5c5c;letter-spacing:-0.174px;">05-28-2021 - Ponazuril - deworming for puppies</div>
<div id="t48" class="t" style="left:116.75px;top:308.89px;font-size:6.38px;line-height:7.66px;font-weight:400;color:#444;letter-spacing:-0.677px;">Exams</div>
<div id="t49" class="t" style="left:116.75px;top:320.79px;font-size:6.38px;line-height:7.66px;font-weight:400;color:#5c5c5c;letter-spacing:-0.328px;">05-27-2021 - BBCR Medical Records</div>
<div id="t50" class="t" style="left:338.90px;top:239.29px;font-size:6.38px;line-height:7.66px;font-weight:400;color:#444;letter-spacing:-0.374px;">Vaccinations</div>
<div id="t51" class="t" style="left:338.90px;top:250.89px;font-size:6.38px;line-height:7.66px;font-weight:400;color:#5c5c5c;letter-spacing:-0.257px;">05-28-2021 - Bordetella Vaccine</div>
<div id="t52" class="t" style="left:338.90px;top:269.69px;font-size:6.38px;line-height:7.66px;font-weight:400;color:#444;letter-spacing:-0.405px;">Diagnostics</div>
<div id="t53" class="t" style="left:338.90px;top:281.29px;font-size:6.38px;line-height:7.66px;font-weight:400;color:#5c5c5c;letter-spacing:-0.227px;">05-28-2021 - Heartworm Snap Test</div>
<div id="t54" class="t" style="left:338.90px;top:290.39px;font-size:6.38px;line-height:7.66px;font-weight:400;color:#5c5c5c;letter-spacing:-0.263px;">05-28-2021 - Diagnostic Test 1</div>
<div id="t55" class="t" style="left:338.90px;top:309.19px;font-size:6.38px;line-height:7.66px;font-weight:400;color:#444;letter-spacing:-0.455px;">Surgeries</div>
<div id="t56" class="t" style="left:338.90px;top:320.79px;font-size:6.38px;line-height:7.66px;font-weight:400;color:#5c5c5c;letter-spacing:-0.277px;">05-28-2021 - Broken Bone</div>
<div id="t57" class="t" style="left:114.80px;top:365.79px;font-size:6.87px;line-height:8.24px;font-weight:400;color:#383838;letter-spacing:-0.092px;">Weight History</div>
<div id="t58" class="t" style="left:536.25px;transform:translateX(-50%);top:367.13px;font-size:5.67px;line-height:6.80px;font-weight:700;color:#fff;letter-spacing:-0.078px;">+ Weight</div>
<div id="t59" class="t" style="left:116.90px;top:390.89px;font-size:6.38px;line-height:7.66px;font-weight:400;color:#444;letter-spacing:-0.384px;">Weight List</div>
<div id="t60" class="t" style="left:116.90px;top:405.29px;font-size:6.38px;line-height:7.66px;font-weight:400;color:#5c5c5c;letter-spacing:-0.300px;">06-19-2021 - 29 lbs</div>
<div id="t61" class="t" style="left:116.90px;top:416.33px;font-size:6.38px;line-height:7.66px;font-weight:400;color:#5c5c5c;letter-spacing:-0.300px;">06-17-2021 - 23 lbs</div>
<div id="t62" class="t" style="left:116.90px;top:427.37px;font-size:6.38px;line-height:7.66px;font-weight:400;color:#5c5c5c;letter-spacing:-0.300px;">06-14-2021 - 38 lbs</div>
<div id="t63" class="t" style="left:116.90px;top:438.41px;font-size:6.38px;line-height:7.66px;font-weight:400;color:#5c5c5c;letter-spacing:-0.300px;">06-01-2021 - 36 lbs</div>
<div id="t64" class="t" style="left:116.90px;top:449.45px;font-size:6.38px;line-height:7.66px;font-weight:400;color:#5c5c5c;letter-spacing:-0.300px;">05-27-2021 - 12 lbs</div>
<div id="t65" class="t" style="left:116.90px;top:460.49px;font-size:6.38px;line-height:7.66px;font-weight:400;color:#5c5c5c;letter-spacing:-0.275px;">05-26-2021 - 11 lbs</div>
<div id="t66" class="t" style="left:517.10px;transform:translateX(-50%);top:391.03px;font-size:5.67px;line-height:6.80px;font-weight:700;color:#fff;letter-spacing:0.000px;">lbs</div>
<div id="t67" class="t" style="left:528.30px;transform:translateX(-50%);top:391.03px;font-size:5.67px;line-height:6.80px;font-weight:400;color:#555;letter-spacing:0.000px;">kg</div>
<div id="t68" class="t" style="left:115.00px;top:527.99px;font-size:6.87px;line-height:8.24px;font-weight:400;color:#383838;letter-spacing:-0.159px;">Medical Notes</div>
<div id="t69" class="t" style="left:526.50px;transform:translateX(-50%);top:529.13px;font-size:5.67px;line-height:6.80px;font-weight:700;color:#fff;letter-spacing:-0.242px;">+ Note</div>
<div id="t70" class="t" style="left:332.30px;transform:translateX(-50%);top:554.06px;font-size:6.76px;line-height:8.11px;font-weight:400;color:#555;letter-spacing:-0.063px;">No medical notes have been added.</div>
<div id="t71" class="t" style="left:332.10px;transform:translateX(-50%);top:568.50px;font-size:5.89px;line-height:7.07px;font-weight:700;color:#fff;letter-spacing:-0.188px;">+ Note</div>
<div id="t72" class="t" style="left:576.30px;top:183.99px;font-size:6.87px;line-height:8.24px;font-weight:400;color:#383838;letter-spacing:-0.052px;">Animal Profile</div>
<div id="t73" class="t" style="left:771.30px;transform:translateX(-50%);top:184.38px;font-size:5.12px;line-height:6.14px;font-weight:700;color:#fff;letter-spacing:0.144px;">Stray</div>
<div id="t74" class="t" style="left:578.60px;top:210.03px;font-size:6.0px;line-height:7.20px;font-weight:700;color:#444;letter-spacing:-0.348px;-webkit-text-stroke:0.15px currentColor;">Species:</div>
<div id="t75" class="t" style="left:667.20px;top:209.90px;font-size:6.21px;line-height:7.45px;font-weight:400;color:#585858;letter-spacing:-0.330px;">Dog</div>
<div id="t76" class="t" style="left:578.60px;top:221.95px;font-size:6.0px;line-height:7.20px;font-weight:700;color:#444;letter-spacing:-0.269px;-webkit-text-stroke:0.15px currentColor;">Breed:</div>
<div id="t77" class="t" style="left:667.20px;top:221.82px;font-size:6.21px;line-height:7.45px;font-weight:400;color:#585858;letter-spacing:-0.095px;">Labrador Retriever</div>
<div id="t78" class="t" style="left:578.60px;top:233.87px;font-size:6.0px;line-height:7.20px;font-weight:700;color:#444;letter-spacing:-0.122px;-webkit-text-stroke:0.15px currentColor;">Secondary Breed:</div>
<div id="t79" class="t" style="left:667.20px;top:233.74px;font-size:6.21px;line-height:7.45px;font-weight:400;color:#585858;letter-spacing:-0.285px;">Mix</div>
<div id="t80" class="t" style="left:578.60px;top:245.79px;font-size:6.0px;line-height:7.20px;font-weight:700;color:#444;letter-spacing:-0.159px;-webkit-text-stroke:0.15px currentColor;">Gender:</div>
<div id="t81" class="t" style="left:667.20px;top:245.66px;font-size:6.21px;line-height:7.45px;font-weight:400;color:#585858;letter-spacing:-0.263px;">Male</div>
<div id="t82" class="t" style="left:578.60px;top:257.71px;font-size:6.0px;line-height:7.20px;font-weight:700;color:#444;letter-spacing:-0.312px;-webkit-text-stroke:0.15px currentColor;">Color:</div>
<div id="t83" class="t" style="left:667.20px;top:257.58px;font-size:6.21px;line-height:7.45px;font-weight:400;color:#585858;letter-spacing:-0.305px;">Cream</div>
<div id="t84" class="t" style="left:578.60px;top:269.63px;font-size:6.0px;line-height:7.20px;font-weight:700;color:#444;letter-spacing:-0.087px;-webkit-text-stroke:0.15px currentColor;">Est. Birthday:</div>
<div id="t85" class="t" style="left:667.20px;top:269.50px;font-size:6.21px;line-height:7.45px;font-weight:400;color:#585858;letter-spacing:-0.253px;">05-27-2019</div>
<div id="t86" class="t" style="left:578.60px;top:281.55px;font-size:6.0px;line-height:7.20px;font-weight:700;color:#444;letter-spacing:-0.260px;-webkit-text-stroke:0.15px currentColor;">Age Group:</div>
<div id="t87" class="t" style="left:667.20px;top:281.42px;font-size:6.21px;line-height:7.45px;font-weight:400;color:#585858;letter-spacing:-0.148px;">Adult</div>
<div id="t88" class="t" style="left:578.60px;top:293.47px;font-size:6.0px;line-height:7.20px;font-weight:700;color:#444;letter-spacing:-0.224px;-webkit-text-stroke:0.15px currentColor;">Rabies Tag:</div>
<div id="t89" class="t" style="left:667.20px;top:293.34px;font-size:6.21px;line-height:7.45px;font-weight:400;color:#585858;letter-spacing:-0.251px;">123123</div>
<div id="t90" class="t" style="left:578.60px;top:305.39px;font-size:6.0px;line-height:7.20px;font-weight:700;color:#444;letter-spacing:-0.179px;-webkit-text-stroke:0.15px currentColor;">Size Group:</div>
<div id="t91" class="t" style="left:667.20px;top:305.26px;font-size:6.21px;line-height:7.45px;font-weight:400;color:#585858;letter-spacing:-0.303px;">Small</div>
<div id="t92" class="t" style="left:578.60px;top:317.31px;font-size:6.0px;line-height:7.20px;font-weight:700;color:#444;letter-spacing:0.074px;-webkit-text-stroke:0.15px currentColor;">Temperament:</div>
<div id="t93" class="t" style="left:667.20px;top:317.18px;font-size:6.21px;line-height:7.45px;font-weight:400;color:#585858;letter-spacing:-0.187px;">Social, Aggressive, Skittish</div>
<div id="t94" class="t" style="left:578.60px;top:329.23px;font-size:6.0px;line-height:7.20px;font-weight:700;color:#444;letter-spacing:-0.096px;-webkit-text-stroke:0.15px currentColor;">Altered:</div>
<div id="t95" class="t" style="left:667.20px;top:329.10px;font-size:6.21px;line-height:7.45px;font-weight:400;color:#585858;letter-spacing:-0.508px;">Yes</div>
<div id="t96" class="t" style="left:578.60px;top:361.03px;font-size:6.0px;line-height:7.20px;font-weight:700;color:#444;letter-spacing:-0.094px;-webkit-text-stroke:0.15px currentColor;">Microchip:</div>
<div id="t97" class="t" style="left:578.60px;top:369.83px;font-size:6.32px;line-height:7.58px;font-weight:400;color:#646464;letter-spacing:-0.379px;">912341231</div>
<div id="t98" class="t" style="left:578.60px;top:379.03px;font-size:6.0px;line-height:7.20px;font-weight:700;color:#444;letter-spacing:-0.076px;-webkit-text-stroke:0.15px currentColor;">Microchip Issuer:</div>
<div id="t99" class="t" style="left:578.60px;top:387.83px;font-size:6.32px;line-height:7.58px;font-weight:400;color:#646464;letter-spacing:-0.182px;">Found Animals</div>
<div id="t100" class="t" style="left:578.60px;top:416.53px;font-size:6.0px;line-height:7.20px;font-weight:700;color:#444;letter-spacing:-0.070px;-webkit-text-stroke:0.15px currentColor;">Weight:</div>
<div id="t101" class="t" style="left:578.60px;top:427.43px;font-size:6.32px;line-height:7.58px;font-weight:400;color:#646464;letter-spacing:-0.261px;">06-19-2021 - 29 lbs</div>
<div id="t102" class="t" style="left:578.60px;top:438.36px;font-size:6.32px;line-height:7.58px;font-weight:400;color:#646464;letter-spacing:-0.261px;">06-17-2021 - 23 lbs</div>
<div id="t103" class="t" style="left:578.60px;top:449.29px;font-size:6.32px;line-height:7.58px;font-weight:400;color:#646464;letter-spacing:-0.261px;">06-14-2021 - 38 lbs</div>
<div id="t104" class="t" style="left:578.60px;top:460.22px;font-size:6.32px;line-height:7.58px;font-weight:400;color:#646464;letter-spacing:-0.261px;">06-01-2021 - 36 lbs</div>
<div id="t105" class="t" style="left:578.60px;top:489.53px;font-size:6.0px;line-height:7.20px;font-weight:700;color:#444;letter-spacing:-0.140px;-webkit-text-stroke:0.15px currentColor;">Animal Bio:</div>
<div id="t106" class="t" style="left:578.60px;top:506.73px;font-size:6.32px;line-height:7.58px;font-weight:400;color:#646464;letter-spacing:-0.129px;">This is a bio Etiam ornare ex id laoreet pretium. Vestibulum nulla lacus,</div>
<div id="t107" class="t" style="left:578.60px;top:515.73px;font-size:6.32px;line-height:7.58px;font-weight:400;color:#646464;letter-spacing:-0.074px;">posuere fringilla efficitur a, dapibus ac nisl. Nullam hendrerit finibus erat</div>
<div id="t108" class="t" style="left:578.60px;top:524.73px;font-size:6.32px;line-height:7.58px;font-weight:400;color:#646464;letter-spacing:-0.146px;">ut cursus. Nunc quis malesuada magna, vitae dapibus quam.for Prada</div>
</body></html>
